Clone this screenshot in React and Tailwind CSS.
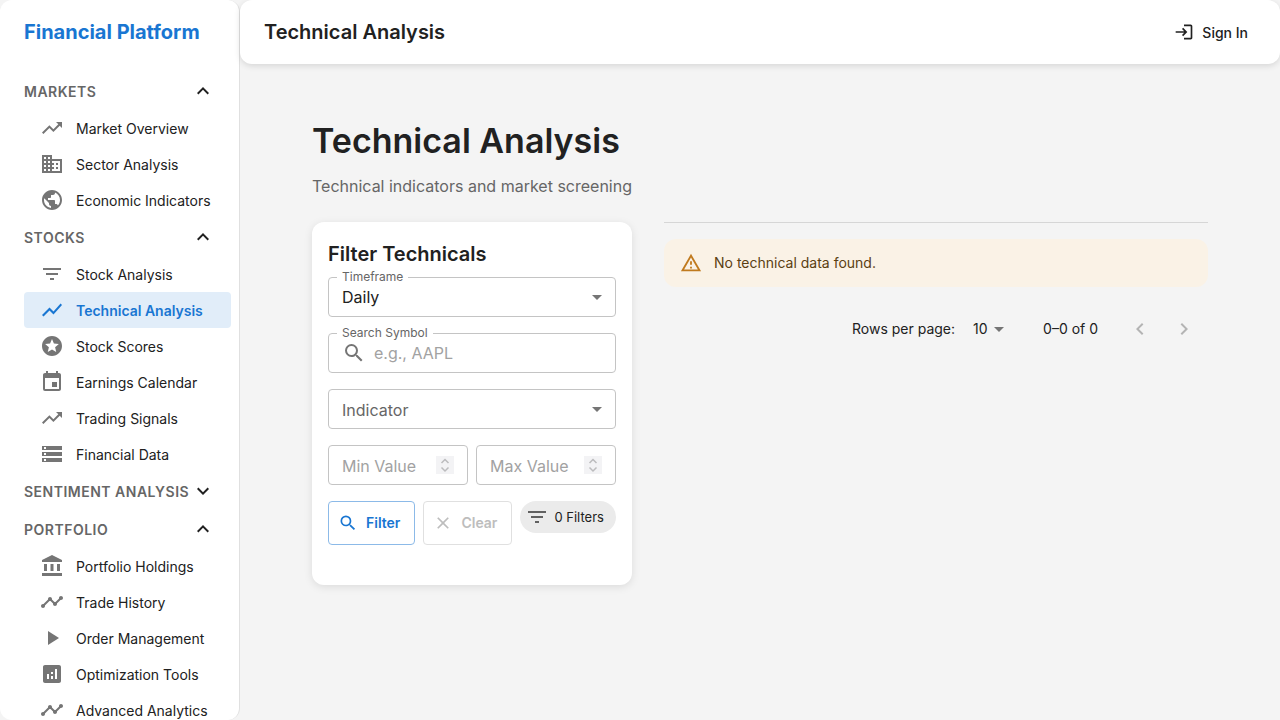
import React, { useState } from 'react';
import {
  MdAccountBalance,
  MdAnalytics,
  MdArrowDropDown,
  MdBusiness,
  MdChevronLeft,
  MdChevronRight,
  MdClear,
  MdEvent,
  MdExpandLess,
  MdExpandMore,
  MdFilterList,
  MdLogin,
  MdOutlineReportProblem,
  MdPlayArrow,
  MdPublic,
  MdSearch,
  MdShowChart,
  MdStars,
  MdStorage,
  MdTimeline,
  MdTrendingUp,
} from 'react-icons/md';

const sections = [
  {
    title: 'Markets',
    open: true,
    items: [
      ['Market Overview', MdTrendingUp],
      ['Sector Analysis', MdBusiness],
      ['Economic Indicators', MdPublic],
    ],
  },
  {
    title: 'Stocks',
    open: true,
    items: [
      ['Stock Analysis', MdFilterList],
      ['Technical Analysis', MdShowChart],
      ['Stock Scores', MdStars],
      ['Earnings Calendar', MdEvent],
      ['Trading Signals', MdTrendingUp],
      ['Financial Data', MdStorage],
    ],
  },
  { title: 'Sentiment Analysis', open: false, items: [] },
  {
    title: 'Portfolio',
    open: true,
    items: [
      ['Portfolio Holdings', MdAccountBalance],
      ['Trade History', MdTimeline],
      ['Order Management', MdPlayArrow],
      ['Optimization Tools', MdAnalytics],
      ['Advanced Analytics', MdTimeline],
    ],
  },
];

function NavItem({ label, Icon, active }) {
  return (
    <li>
      <a
        href="#"
        aria-current={active ? 'page' : undefined}
        className={
          'flex h-9 items-center gap-3 rounded pl-4 text-sm whitespace-nowrap ' +
          (active ? 'bg-[#e1edf9] font-semibold text-[#1976d2]' : 'text-[#212121]')
        }
      >
        <Icon className={'size-6 shrink-0 ' + (active ? 'text-[#1976d2]' : 'text-[#757575]')} />
        <span className="pt-0.5">{label}</span>
      </a>
    </li>
  );
}

function NavSection({ title, open, items }) {
  const [expanded, setExpanded] = useState(open);
  const Chevron = expanded ? MdExpandLess : MdExpandMore;
  return (
    <section>
      <button
        type="button"
        aria-expanded={expanded}
        onClick={() => setExpanded(!expanded)}
        className="flex h-[38px] w-full items-center justify-between pr-6 pl-6 text-sm font-semibold tracking-[0.5px] whitespace-nowrap text-[#666666] uppercase"
      >
        <span className="pt-0.5">{title}</span>
        <Chevron className="size-6 shrink-0 text-[#212121]" />
      </button>
      {expanded && (
        <ul className="pr-2 pl-6">
          {items.map(([label, Icon]) => (
            <NavItem key={label} label={label} Icon={Icon} active={label === 'Technical Analysis'} />
          ))}
        </ul>
      )}
    </section>
  );
}

function Sidebar() {
  return (
    <aside className="h-screen w-60 shrink-0 overflow-hidden rounded-xl border-r border-[#e0e0e0] bg-white">
      <div className="flex h-16 items-center px-6 text-xl font-bold text-[#1976d2]">Financial Platform</div>
      <nav className="pt-2">
        {sections.map((section) => (
          <NavSection key={section.title} {...section} />
        ))}
      </nav>
    </aside>
  );
}

function FloatingLabel({ htmlFor, children }) {
  return (
    <label
      htmlFor={htmlFor}
      className="absolute -top-2 left-[9px] bg-white px-[5px] text-xs leading-4 text-[#666666]"
    >
      {children}
    </label>
  );
}

const box = 'h-10 w-full rounded border border-[#c4c4c4] bg-white text-base outline-none focus:border-[#1976d2]';

function SelectBox({ id, label, floating, options }) {
  return (
    <div className="relative">
      {floating && <FloatingLabel htmlFor={id}>{label}</FloatingLabel>}
      <select
        id={id}
        aria-label={label}
        className={
          box + ' appearance-none pr-8 pl-[13px] ' + (floating ? 'text-[#212121]' : 'pt-0.5 text-[#666666]')
        }
      >
        {options.map((option) => (
          <option key={option}>{option}</option>
        ))}
      </select>
      <MdArrowDropDown className="pointer-events-none absolute top-2 right-[7px] size-6 text-[#757575]" />
    </div>
  );
}

function NumberBox({ label }) {
  return (
    <div className="relative min-w-0 flex-1">
      <input
        type="number"
        aria-label={label}
        placeholder={label}
        className={
          box +
          ' appearance-none pt-0.5 pr-8 pl-[13px] text-[#212121] placeholder:text-[#a2a2a2] [&::-webkit-inner-spin-button]:appearance-none'
        }
      />
      <svg
        viewBox="0 0 18 18"
        aria-hidden="true"
        className="pointer-events-none absolute top-[11px] right-[14px] size-[18px] bg-[#f3f3f5]"
        fill="none"
        stroke="#bcbcbe"
        strokeWidth="1.5"
      >
        <path d="M5.5 7 9 3.5 12.500 7M5.500 11.500 9 15l3.500-3.500" />
      </svg>
    </div>
  );
}

function FilterCard() {
  return (
    <form
      onSubmit={(event) => event.preventDefault()}
      className="w-80 shrink-0 rounded-xl bg-white px-4 pt-4 pb-10 shadow-[0_2px_8px_rgba(0,0,0,0.1)]"
    >
      <h2 className="mb-[7px] text-xl leading-8 font-semibold">Filter Technicals</h2>
      <div className="flex flex-col gap-4">
        <SelectBox id="timeframe" label="Timeframe" floating options={['Daily', 'Weekly', 'Monthly']} />
        <div className="relative">
          <FloatingLabel htmlFor="symbol">Search Symbol</FloatingLabel>
          <MdSearch className="pointer-events-none absolute top-2 left-[14px] size-6 text-[#757575]" />
          <input
            id="symbol"
            type="text"
            placeholder="e.g., AAPL"
            className={box + ' pr-3 pl-[45px] text-[#212121] placeholder:text-[#a2a2a2]'}
          />
        </div>
        <SelectBox id="indicator" label="Indicator" options={['Indicator', 'RSI', 'MACD', 'SMA']} />
        <div className="flex gap-2">
          <NumberBox label="Min Value" />
          <NumberBox label="Max Value" />
        </div>
        <div className="flex items-start gap-2">
          <button
            type="submit"
            className="flex h-11 items-center gap-2 rounded border border-[#8cbae8] pr-[14px] pl-[9px] text-sm font-semibold text-[#1976d2]"
          >
            <MdSearch className="size-5" />
            Filter
          </button>
          <button
            type="button"
            disabled
            className="flex h-11 items-center gap-2 rounded border border-[#e0e0e0] pr-[14px] pl-[9px] text-sm font-semibold text-[#bdbdbd]"
          >
            <MdClear className="size-5" />
            Clear
          </button>
          <span className="flex h-8 flex-1 items-center gap-[5px] rounded-full bg-[#ebebeb] pl-[5px] text-[13px] whitespace-nowrap text-[#212121]">
            <MdFilterList className="size-6 text-[#616161]" />
            <span className="pt-0.5">0 Filters</span>
          </span>
        </div>
      </div>
    </form>
  );
}

function Results() {
  return (
    <section className="min-w-0 flex-1">
      <hr className="border-[#d6d6d6]" />
      <div role="alert" className="mt-4 flex h-12 items-center gap-3 rounded-xl bg-[#faf2e6] px-4 text-sm text-[#5a4012]">
        <MdOutlineReportProblem className="size-[22px] text-[#c07a1e]" />
        No technical data found.
      </div>
      <div className="mt-4 flex h-[52px] items-center justify-end pr-[2px] text-sm">
        <label htmlFor="rows">Rows per page:</label>
        <div className="relative ml-4">
          <select id="rows" className="h-6 w-10 appearance-none bg-transparent pl-[2px] outline-none">
            <option>10</option>
            <option>25</option>
            <option>50</option>
          </select>
          <MdArrowDropDown className="pointer-events-none absolute top-0 right-0 size-6 text-[#757575]" />
        </div>
        <span className="ml-8">0–0 of 0</span>
        <div className="ml-5 flex">
          <button type="button" disabled aria-label="Previous page" className="flex size-11 items-center justify-center text-[#b4b4b4]">
            <MdChevronLeft className="size-6" />
          </button>
          <button type="button" disabled aria-label="Next page" className="flex size-11 items-center justify-center text-[#b4b4b4]">
            <MdChevronRight className="size-6" />
          </button>
        </div>
      </div>
    </section>
  );
}

export default function App() {
  return (
    <div className="flex h-screen overflow-hidden bg-[#f4f4f4] font-[Inter,sans-serif] text-[#212121]">
      <Sidebar />
      <div className="flex min-w-0 flex-1 flex-col">
        <header className="flex h-16 shrink-0 items-center justify-between rounded-xl bg-white pr-8 pl-6 shadow-[0_2px_6px_rgba(0,0,0,0.12)]">
          <div className="text-xl font-semibold">Technical Analysis</div>
          <button type="button" className="flex items-center gap-2 text-sm font-medium">
            <MdLogin className="size-5" />
            <span className="pt-0.5">Sign In</span>
          </button>
        </header>
        <main className="px-[72px] pt-14">
          <h1 className="text-[34px] leading-[42px] font-semibold">Technical Analysis</h1>
          <p className="mt-3 text-base text-[#666666]">Technical indicators and market screening</p>
          <div className="mt-6 flex items-start gap-8">
            <FilterCard />
            <Results />
          </div>
        </main>
      </div>
    </div>
  );
}
